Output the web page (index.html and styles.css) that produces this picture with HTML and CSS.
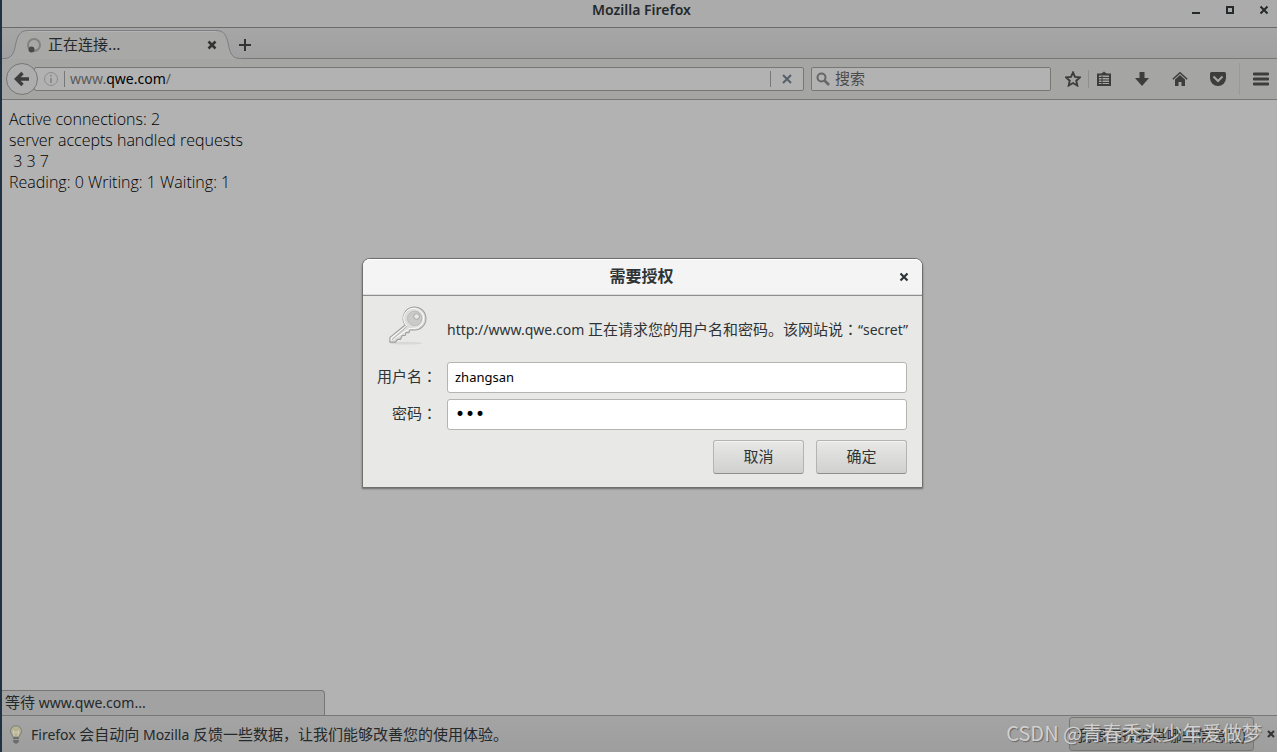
FILE: index.html
```html
<!DOCTYPE html>
<html lang="zh-CN">
<head>
    <meta charset="UTF-8">
    <meta name="viewport" content="width=device-width, initial-scale=1.0">
    <title>Mozilla Firefox</title>
    <link rel="stylesheet" href="styles.css">
</head>
<body>
    <div class="window">
        <header class="titlebar">
            <h1>Mozilla Firefox</h1>
            <div class="window-controls">
                <button aria-label="最小化"><svg width="10" height="10" viewBox="0 0 10 10"><path d="M1 7h8v2H1z"/></svg></button>
                <button aria-label="最大化"><svg width="10" height="10" viewBox="0 0 10 10"><path d="M1 1h8v8H1zM3 3v4h4V3z" fill-rule="evenodd"/></svg></button>
                <button aria-label="关闭"><svg width="10" height="10" viewBox="0 0 10 10"><path d="M1.5 1.5l7 7M8.5 1.5l-7 7" stroke="#24292b" stroke-width="2"/></svg></button>
            </div>
        </header>

        <div class="tabstrip">
            <div class="tab">
                <svg class="tab-shape" width="240" height="31" viewBox="0 0 240 31">
                    <path d="M0 30.5h2C10 30.5 12 25 13.5 17C15.5 7 18 2.5 26 2.5H214C222 2.5 224.5 7 226.5 17C228 25 230 30.5 238 30.5H240V31H0z" fill="#a8a8a6"/>
                    <path d="M0 30.5h2C10 30.5 12 25 13.5 17C15.5 7 18 2.5 26 2.5H214C222 2.5 224.5 7 226.5 17C228 25 230 30.5 238 30.5H240" fill="none" stroke="#7b7f84"/>
                    <path d="M26 3.5H214" stroke="#b4b4b4"/>
                </svg>
                <svg class="spinner" width="16" height="16" viewBox="0 0 16 16">
                    <circle cx="8" cy="8" r="6" fill="none" stroke="#828282" stroke-width="2"/>
                    <circle cx="5.5" cy="12.5" r="3" fill="#4a4a4a"/>
                </svg>
                <span class="tab-label zh">正在连接...</span>
                <button class="tab-close" aria-label="关闭标签页"><svg width="10" height="10" viewBox="0 0 10 10"><path d="M1.5 1.5l7 7M8.5 1.5l-7 7" stroke="#333" stroke-width="2.5"/></svg></button>
            </div>
            <button class="new-tab" aria-label="新建标签页"><svg width="12" height="12" viewBox="0 0 12 12"><path d="M0 6h12M6 0v12" stroke="#333" stroke-width="2"/></svg></button>
        </div>

        <nav class="toolbar">
            <button class="back" aria-label="后退"><svg width="16" height="16" viewBox="0 0 16 16"><path d="M8.5 2L2.5 8l6 6M3 8h12" fill="none" stroke="#3d3d3d" stroke-width="3.5"/></svg></button>
            <div class="urlbar">
                <svg class="info" width="14" height="14" viewBox="0 0 14 14">
                    <circle cx="7" cy="7" r="6.5" fill="none" stroke="#8c8c8c"/>
                    <path d="M6 3h2v1.5H6zM6 6h2v5H6z" fill="#8c8c8c"/>
                </svg>
                <a class="address" href="#"><span>www.</span>qwe.com<span>/</span></a>
                <button class="stop" aria-label="停止"><svg width="10" height="10" viewBox="0 0 10 10"><path d="M1 1l8 8M9 1l-8 8" stroke="#56606b" stroke-width="2"/></svg></button>
            </div>
            <div class="searchbar">
                <svg width="14" height="14" viewBox="0 0 14 14"><circle cx="5.5" cy="5.5" r="4" fill="none" stroke="#666" stroke-width="2"/><path d="M8.5 8.5l4.5 4.5" stroke="#666" stroke-width="2.5"/></svg>
                <input class="zh" type="text" placeholder="搜索" aria-label="搜索">
            </div>
            <div class="tools">
                <button aria-label="书签"><svg width="16" height="16" viewBox="0 0 16 16"><path d="M8 1.5l2 4.4 4.9.5-3.6 3.3 1 4.8L8 12l-4.3 2.5 1-4.8L1.1 6.4 6 5.9z" fill="none" stroke="#3d3d3d" stroke-width="1.9"/></svg></button>
                <button class="bookmarks" aria-label="书签菜单"><svg width="16" height="16" viewBox="0 0 16 16"><path d="M2 3.5h12V14H2z" fill="none" stroke="#3d3d3d" stroke-width="2"/><path d="M5 3l3-2.5L11 3z" fill="#3d3d3d"/><path d="M3 6.5h10M3 9h10M3 11.5h10M6 5v8" stroke="#3d3d3d"/></svg></button>
                <button aria-label="下载"><svg width="16" height="16" viewBox="0 0 16 16"><path d="M5.5 1h5v6H15l-7 8-7-8h4.5z" fill="#3d3d3d"/></svg></button>
                <button aria-label="主页"><svg width="16" height="16" viewBox="0 0 16 16"><path d="M.8 8.2L8 1.8l7.2 6.4" fill="none" stroke="#3d3d3d" stroke-width="1.5"/><path d="M3 8.5l5-4.5 5 4.5V15H9.5v-4h-3v4H3z" fill="#3d3d3d"/></svg></button>
                <button aria-label="Pocket"><svg width="16" height="16" viewBox="0 0 16 16"><path d="M1.5 1h13Q16 1 16 2.5V7a8 8 0 0 1-16 0V2.5Q0 1 1.5 1z" fill="#3d3d3d"/><path d="M3.5 5.5L8 10l4.5-4.5" fill="none" stroke="#a5a5a3" stroke-width="2"/></svg></button>
                <button class="menu" aria-label="菜单"><svg width="16" height="14" viewBox="0 0 16 14"><path d="M1 2h14M1 7h14M1 12h14" stroke="#3d3d3d" stroke-width="2.8" stroke-linecap="round"/></svg></button>
            </div>
        </nav>

        <main class="page">
            <pre class="stats">Active connections: 2
server accepts handled requests
 3 3 7
Reading: 0 Writing: 1 Waiting: 1</pre>
            <div class="status"><span class="zh">等待</span> www.qwe.com...</div>
        </main>

        <footer class="notice">
            <svg width="16" height="20" viewBox="0 0 14 18">
                <path d="M7 1.5a5 5 0 0 0-5 5c0 2.500 2 3 2.500 5.500h5C10 9.500 12 9 12 6.500a5 5 0 0 0-5-5z" fill="#b5b193" stroke="#858580"/>
                <path d="M5.5 11L4.5 6.5 7 8l2.5-1.5L8.5 11" fill="none" stroke="#d0cdb5"/>
                <path d="M4.5 12h5v4L8 17.5H6L4.5 16z" fill="#696969"/><path d="M4.5 14h5" stroke="#999"/>
            </svg>
            <p>Firefox <span class="zh">会自动向</span> Mozilla <span class="zh">反馈一些数据，让我们能够改善您的使用体验。</span></p>
            <button class="choose zh">我想选择提供哪些信息(<u>C</u>)</button>
            <button class="notice-close" aria-label="关闭"><svg width="8" height="8" viewBox="0 0 8 8"><path d="M1 1l6 6M7 1l-6 6" stroke="#333" stroke-width="2"/></svg></button>
        </footer>
    </div>

    <div class="overlay">
        <form class="dialog" role="dialog" aria-labelledby="dialog-title">
            <div class="dialog-header">
                <h2 id="dialog-title">需要授权</h2>
                <button type="button" class="dialog-close" aria-label="关闭"><svg width="10" height="10" viewBox="0 0 10 10"><path d="M1.5 1.5l7 7M8.5 1.5l-7 7" stroke="#2e3436" stroke-width="2.2"/></svg></button>
            </div>
            <div class="dialog-body">
                <svg class="key" width="40" height="40" viewBox="0 0 42 42">
                    <ellipse cx="19" cy="39" rx="17" ry="1.5" fill="#d8d8d6"/>
                    <path d="M18 20A12 12 0 1 1 26 25L23 25 22 28 19 28 18 31 15 31 13 35 10 35 8 38 2 38 2 33z" fill="#dcdcda" stroke="#a0a09e" stroke-width="1.2"/>
                    <path d="M19.5 20.5A10.5 10.5 0 1 1 26 23.5L22 24 3.5 36.5V33.5z" fill="none" stroke="#fff"/>
                    <path d="M20 21L4 36" stroke="#b0b0ae"/>
                    <circle cx="28" cy="13" r="7.5" fill="#cacac7" stroke="#b8b8b6"/>
                    <circle cx="30" cy="11" r="3" fill="#e8e8e6" stroke="#a2a2a0"/>
                </svg>
                <p class="message">http://www.qwe.com <span class="zh">正在请求您的用户名和密码。该网站说<span class="colon" lang="zh-TW">：</span></span>“secret”</p>
                <label class="zh" for="username">用户名<span class="colon" lang="zh-TW">：</span></label>
                <input id="username" type="text" value="zhangsan">
                <label class="zh" for="password">密码<span class="colon" lang="zh-TW">：</span></label>
                <input id="password" type="password" value="abc">
                <div class="actions">
                    <button type="button" class="zh">取消</button>
                    <button type="submit" class="zh">确定</button>
                </div>
            </div>
        </form>
    </div>

    <div class="watermark">CSDN @青春秃头少年爱做梦</div>
</body>
</html>
```

FILE: styles.css
```css
* {
    box-sizing: border-box;
}
body {
    margin: 0;
    height: 100vh;
    overflow: hidden;
    font-family: "Noto Sans", "Noto Sans CJK SC", sans-serif;
    font-size: 14px;
    line-height: 20px;
    color: #24292b;
}
h1, h2, p, pre {
    margin: 0;
}
button, input {
    font-family: inherit;
    font-size: inherit;
    color: inherit;
}
button {
    display: flex;
    align-items: center;
    justify-content: center;
    padding: 0;
    border: 0;
    background: none;
}
svg {
    display: block;
    flex: none;
}
.zh {
    font-family: "Noto Sans CJK SC", sans-serif;
    font-size: 15px;
}
.colon {
    font-family: "Noto Sans CJK TC", sans-serif;
}
.window {
    display: flex;
    flex-direction: column;
    height: 100%;
    border-left: 2px solid #1f3142;
    background: #b2b2b2;
}

/* Title bar */
.titlebar {
    position: relative;
    height: 28px;
    padding-left: 4px;
    background: #ababab;
    border-bottom: 1px solid #6b6b69;
}
.titlebar h1 {
    font-size: 14px;
    font-weight: 600;
    line-height: 20px;
    text-align: center;
}
.window-controls {
    position: absolute;
    top: 5px;
    right: 8px;
    display: flex;
    gap: 24px;
    fill: #24292b;
}

/* Tabs */
.tabstrip {
    display: flex;
    height: 31px;
    background: linear-gradient(#a6a6a6, #a0a0a0);
    box-shadow: inset 0 -1px #777775;
}
.tab {
    position: relative;
    display: flex;
    align-items: center;
    width: 236px;
    padding: 2px 21px 0 24px;
}
.tab-shape {
    position: absolute;
    top: 0;
    left: 0;
}
.spinner, .tab-label, .tab-close {
    position: relative;
}
.tab-label {
    flex: 1;
    margin-left: 6px;
    padding-bottom: 2px;
}
.new-tab {
    position: relative;
    width: 14px;
    margin-top: 3px;
}

/* Navigation toolbar */
.toolbar {
    display: flex;
    align-items: center;
    height: 41px;
    padding: 0 8px 0 4px;
    background: #a5a5a3;
    border-bottom: 1px solid #777775;
}
.back {
    position: relative;
    width: 32px;
    height: 32px;
    border: 1px solid #777775;
    border-radius: 50%;
    background: #adadad;
}
.urlbar, .searchbar {
    display: flex;
    align-items: center;
    height: 24px;
    border: 1px solid #777775;
    border-radius: 2px;
    background: #b2b2b2;
}
.urlbar {
    flex: 1;
    margin-left: -4px;
    padding-left: 9px;
}
.address {
    flex: 1;
    margin-left: 6px;
    padding-left: 5px;
    border-left: 1px solid #777775;
    line-height: 16px;
    color: #000;
    text-decoration: none;
}
.address span {
    color: #5a5a5a;
}
.stop {
    width: 33px;
    height: 16px;
    border-left: 1px solid #777775;
}
.searchbar {
    width: 240px;
    margin: 0 14px 0 7px;
    padding-left: 4px;
}
.searchbar input {
    flex: 1;
    min-width: 0;
    margin-left: 5px;
    padding: 0 0 3px;
    border: 0;
    outline: 0;
    background: none;
}
.searchbar input::placeholder {
    color: #4b4b4b;
}
.tools {
    display: flex;
    align-items: center;
    gap: 22px;
}
.tools .bookmarks {
    margin-left: -15px;
    padding-left: 7px;
    height: 18px;
    border-left: 1px solid #8f8f8d;
}
.tools .menu {
    height: 32px;
    margin-left: -9px;
    padding-left: 13px;
    border-left: 1px solid #999997;
}

/* Page content */
.page {
    flex: 1;
    display: flex;
    flex-direction: column;
    justify-content: space-between;
    align-items: flex-start;
}
.stats {
    padding: 9px 7px;
    font-family: "Open Sans", sans-serif;
    font-size: 16px;
    font-weight: 300;
    line-height: 21px;
    color: #000;
}
.status {
    width: 323px;
    height: 25px;
    padding: 1px 3px;
    border: 1px solid #777775;
    border-width: 1px 1px 0 0;
    border-radius: 0 4px 0 0;
    background: #a2a2a2;
}

/* Notification bar */
.notice {
    display: flex;
    align-items: center;
    height: 37px;
    padding: 0 2px 0 6px;
    border-top: 1px solid #777775;
    background: linear-gradient(#a4a4a4, #9e9e9e);
}
.notice p {
    flex: 1;
    margin-left: 7px;
}
.choose {
    width: 185px;
    height: 34px;
    border: 1px solid #777775;
    border-radius: 3px;
    background: linear-gradient(#a2a2a0, #8f8f8d);
}
.notice-close {
    margin-left: 13px;
}

/* Authentication dialog */
.overlay {
    position: absolute;
    inset: 0;
    display: flex;
    align-items: center;
    justify-content: center;
    padding: 0 0 6px 8px;
}
.dialog {
    width: 561px;
    border: 1px solid #6f6f6d;
    border-radius: 8px 8px 0 0;
    background: #e8e8e6;
    box-shadow: 0 1px 2px rgba(0, 0, 0, 0.4);
    color: #2e3436;
}
.dialog-header {
    position: relative;
    height: 37px;
    border-bottom: 1px solid #8e8e8c;
    border-radius: 7px 7px 0 0;
    background: #f4f4f4;
    box-shadow: inset 0 1px #fff, inset 0 -1px #dcdcda;
}
.dialog-header h2 {
    padding-right: 2px;
    font-size: 16px;
    font-weight: 700;
    line-height: 35px;
    text-align: center;
}
.dialog-close {
    position: absolute;
    top: 13px;
    right: 13px;
}
.dialog-body {
    display: grid;
    grid-template-columns: 74px minmax(0, 1fr);
    gap: 6px 10px;
    align-items: center;
    padding: 10px 15px 13px 0;
}
.key {
    justify-self: end;
    margin: 0 9px 10px 0;
}
.message {
    padding-bottom: 4px;
    white-space: nowrap;
}
.dialog label {
    padding-bottom: 4px;
    text-align: right;
    white-space: nowrap;
}
.dialog input {
    width: 100%;
    height: 31px;
    padding: 0 7px 1px;
    border: 1px solid #b4b4b1;
    border-radius: 3px;
    background: #fff;
    font-size: 13px;
    color: #000;
}
.dialog input[type="password"] {
    font-family: "DejaVu Sans", sans-serif;
    font-size: 17px;
}
.actions {
    grid-column: 2;
    display: flex;
    justify-content: flex-end;
    gap: 12px;
    margin-top: 4px;
}
.actions button {
    width: 91px;
    height: 34px;
    padding-bottom: 4px;
    border: 1px solid #b4b4b1;
    border-bottom-color: #8e8e8c;
    border-radius: 3px;
    background: linear-gradient(#e8e8e6, #d0d0ce);
    box-shadow: inset 0 1px #f4f4f2;
}

.watermark {
    position: absolute;
    right: 15px;
    bottom: 7px;
    font-family: "Noto Sans CJK SC", sans-serif;
    font-size: 20px;
    line-height: 24px;
    color: #d0d0d0;
    text-shadow: 1px 1px 1px #666;
}
```
